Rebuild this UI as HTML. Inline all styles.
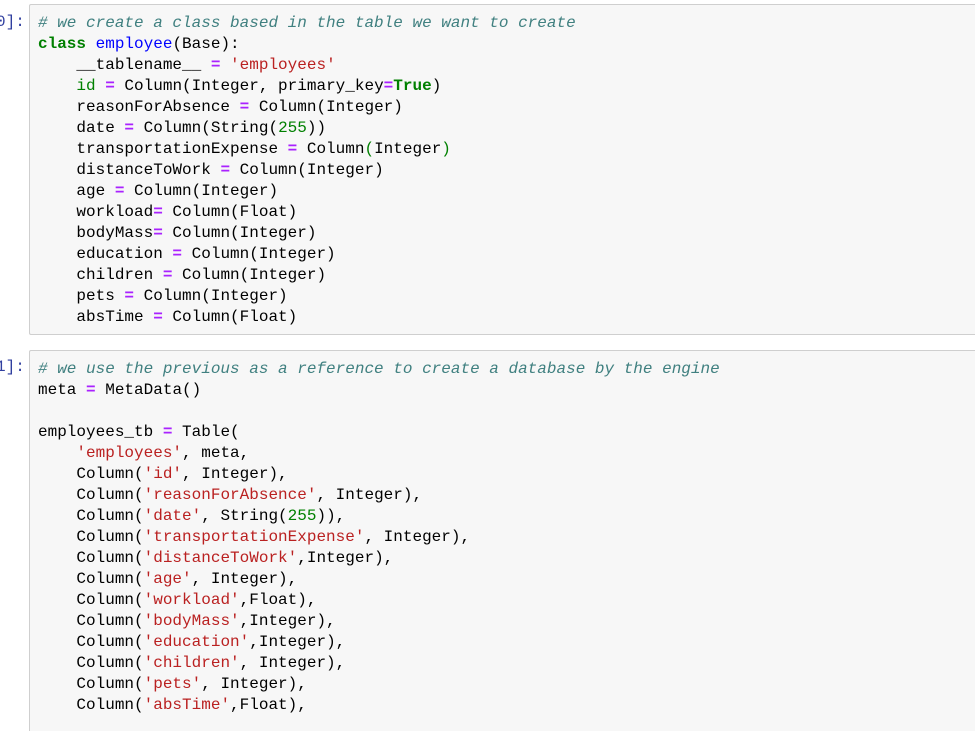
<!DOCTYPE html>
<html><head><style>
html,body{margin:0;background:#fff;width:975px;height:731px;overflow:hidden;}
body{position:relative;font-family:"Liberation Mono",monospace;}
.cell{position:absolute;left:29px;width:946px;background:#f7f7f7;border:1px solid #cfcfcf;border-right:none;border-radius:2px 0 0 2px;box-sizing:border-box;}
pre{margin:0;font-family:"Liberation Mono",monospace;font-size:16px;line-height:21px;color:#000;position:absolute;left:8px;}
.p{position:absolute;font-family:"Liberation Mono",monospace;font-size:16px;color:#303f9f;}
.c{color:#408080;font-style:italic}
.k{color:#008000;font-weight:bold}
.n{color:#0000ff}
.o{color:#aa22ff;font-weight:bold}
.s{color:#ba2121}
.m{color:#008000}
</style></head><body>
<div class="p" style="left:-4px;top:13px">0]:</div>
<div class="cell" style="top:4px;height:331px">
<pre style="top:8px"><span class="c"># we create a class based in the table we want to create</span>
<span class="k">class</span> <span class="n">employee</span>(Base):
    __tablename__ <span class="o">=</span> <span class="s">'employees'</span>
    <span class="m">id</span> <span class="o">=</span> Column(Integer, primary_key<span class="o">=</span><span class="k">True</span>)
    reasonForAbsence <span class="o">=</span> Column(Integer)
    date <span class="o">=</span> Column(String(<span class="m">255</span>))
    transportationExpense <span class="o">=</span> Column<span class="m">(</span>Integer<span class="m">)</span>
    distanceToWork <span class="o">=</span> Column(Integer)
    age <span class="o">=</span> Column(Integer)
    workload<span class="o">=</span> Column(Float)
    bodyMass<span class="o">=</span> Column(Integer)
    education <span class="o">=</span> Column(Integer)
    children <span class="o">=</span> Column(Integer)
    pets <span class="o">=</span> Column(Integer)
    absTime <span class="o">=</span> Column(Float)</pre>
</div>
<div class="p" style="left:-4px;top:358px">1]:</div>
<div class="cell" style="top:350px;height:381px;border-bottom:none;border-radius:2px 0 0 0">
<pre style="top:8px"><span class="c"># we use the previous as a reference to create a database by the engine</span>
meta <span class="o">=</span> MetaData()

employees_tb <span class="o">=</span> Table(
    <span class="s">'employees'</span>, meta,
    Column(<span class="s">'id'</span>, Integer),
    Column(<span class="s">'reasonForAbsence'</span>, Integer),
    Column(<span class="s">'date'</span>, String(<span class="m">255</span>)),
    Column(<span class="s">'transportationExpense'</span>, Integer),
    Column(<span class="s">'distanceToWork'</span>,Integer),
    Column(<span class="s">'age'</span>, Integer),
    Column(<span class="s">'workload'</span>,Float),
    Column(<span class="s">'bodyMass'</span>,Integer),
    Column(<span class="s">'education'</span>,Integer),
    Column(<span class="s">'children'</span>, Integer),
    Column(<span class="s">'pets'</span>, Integer),
    Column(<span class="s">'absTime'</span>,Float),</pre>
</div>
</body></html>
